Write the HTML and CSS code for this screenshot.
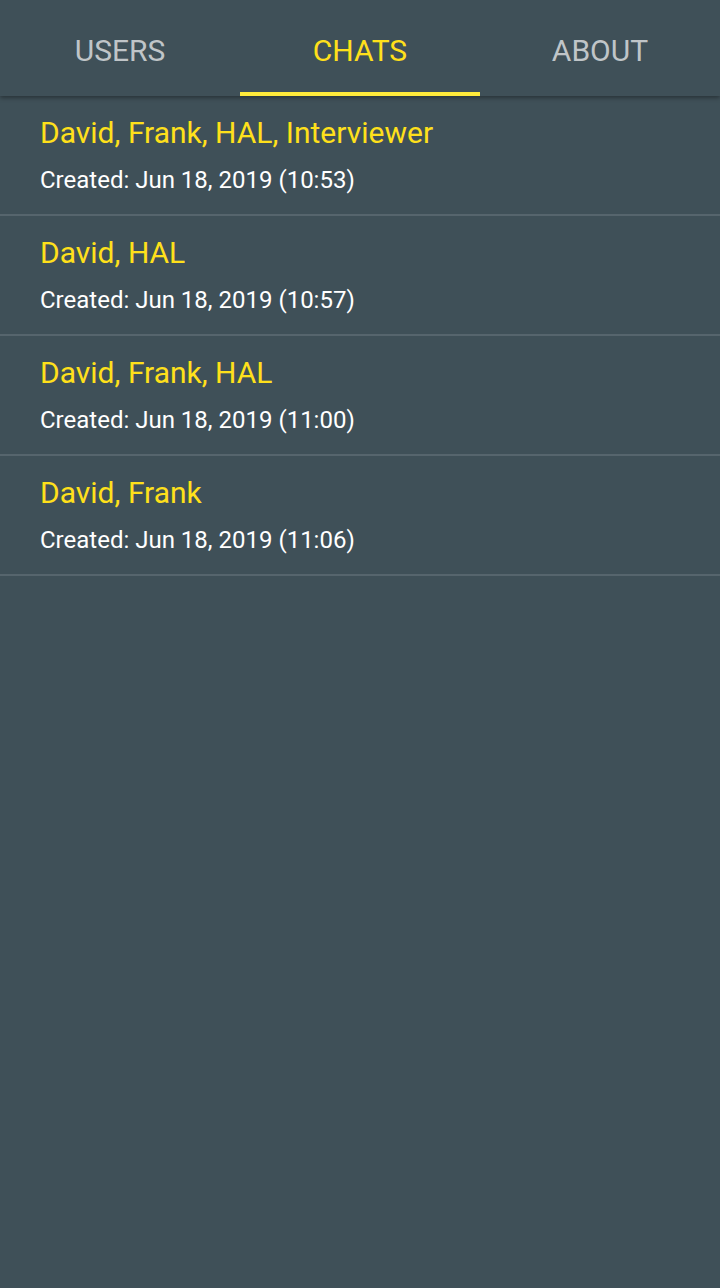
FILE: index.html
```html
<!DOCTYPE html>
<html>
<head>
<meta charset="utf-8">
<link rel="stylesheet" href="styles.css">
</head>
<body>
<div class="app">
  <nav class="tabs">
    <div class="tab">USERS</div>
    <div class="tab active">CHATS</div>
    <div class="tab">ABOUT</div>
  </nav>
  <ul class="list">
    <li class="row">
      <div class="title">David, Frank, HAL, Interviewer</div>
      <div class="sub">Created: Jun 18, 2019 (10:53)</div>
    </li>
    <li class="row">
      <div class="title">David, HAL</div>
      <div class="sub">Created: Jun 18, 2019 (10:57)</div>
    </li>
    <li class="row">
      <div class="title">David, Frank, HAL</div>
      <div class="sub">Created: Jun 18, 2019 (11:00)</div>
    </li>
    <li class="row">
      <div class="title">David, Frank</div>
      <div class="sub">Created: Jun 18, 2019 (11:06)</div>
    </li>
  </ul>
</div>
</body>
</html>
```

FILE: styles.css
```css
html, body {
  margin: 0;
  padding: 0;
  background: #3f5058;
  font-family: Roboto, "Noto Sans", sans-serif;
}
.app {
  width: 720px;
  min-height: 1288px;
  background: #3f5058;
}
.tabs {
  display: flex;
  height: 96px;
  background: #3f5058;
  box-shadow: 0 2px 4px rgba(0,0,0,0.35);
  position: relative;
  z-index: 1;
}
.tab {
  flex: 1;
  display: flex;
  align-items: center;
  justify-content: center;
  font-size: 30px;
  color: #c0c5c8;
  box-sizing: border-box;
  padding-top: 8px;
  border-bottom: 4px solid transparent;
}
.tab.active {
  color: #ffe01b;
  border-bottom-color: #ffeb3b;
}
.list {
  list-style: none;
  margin: 0;
  padding: 0;
}
.row {
  height: 118px;
  box-sizing: content-box;
  border-bottom: 2px solid #56656d;
  padding: 0 40px;
  display: flex;
  flex-direction: column;
  justify-content: center;
  gap: 14px;
}
.title {
  font-size: 30px;
  line-height: 36px;
  color: #ffe01b;
}
.sub {
  font-size: 24px;
  line-height: 30px;
  color: #ffffff;
}
```
